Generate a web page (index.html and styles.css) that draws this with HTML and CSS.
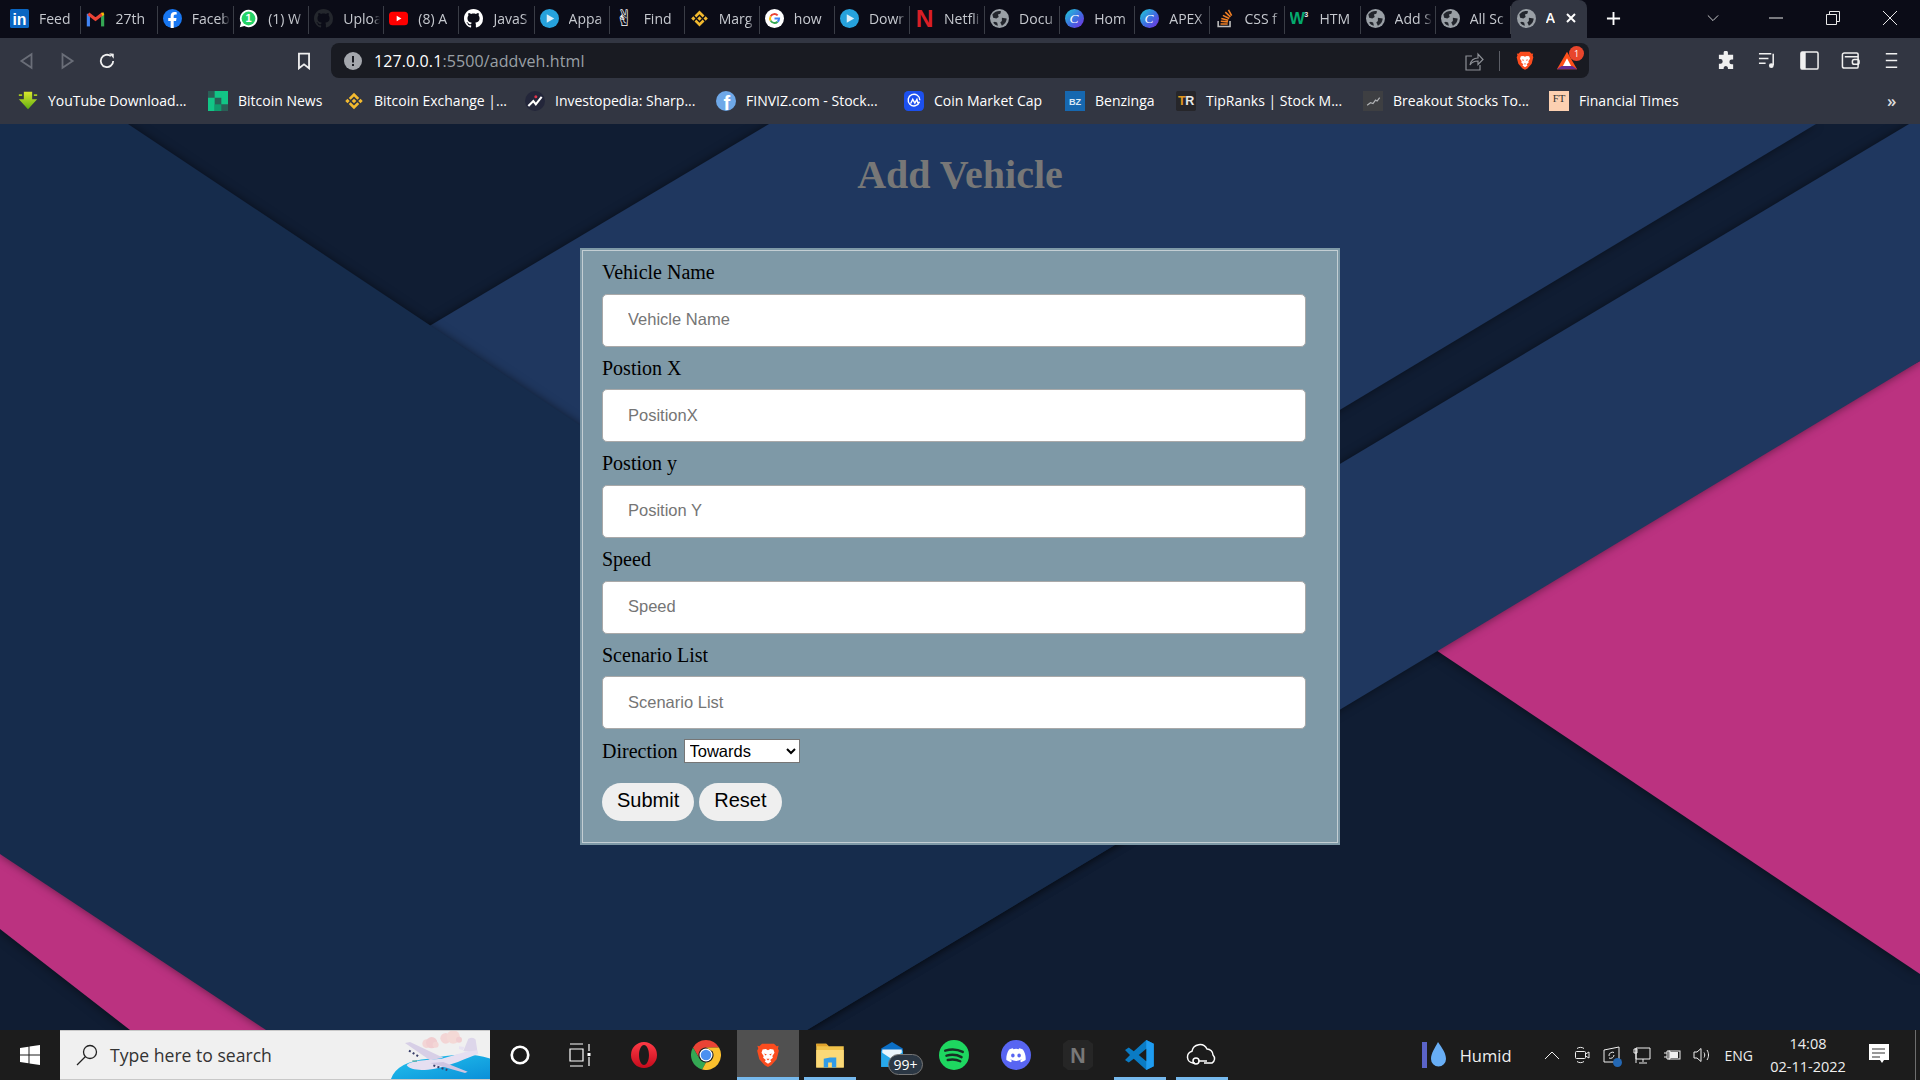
FILE: index.html
```html
<!DOCTYPE html>
<html lang="en">
<head>
<meta charset="utf-8">
<title>Add Vehicle</title>
<link rel="stylesheet" href="styles.css">
</head>
<body>
<svg class="defs" width="0" height="0" aria-hidden="true">
  <defs>
    <linearGradient id="g-canva" x1="0" y1="0" x2="1" y2="1"><stop offset="0" stop-color="#1fd0d8"/><stop offset=".55" stop-color="#3f6be0"/><stop offset="1" stop-color="#7a2be0"/></linearGradient>
    <linearGradient id="g-dl" x1="0" y1="0" x2="0" y2="1"><stop offset="0" stop-color="#d8e62c"/><stop offset="1" stop-color="#5fae12"/></linearGradient>
    <linearGradient id="g-sea" x1="0" y1="0" x2="1" y2="1"><stop offset="0" stop-color="#24c4ee"/><stop offset="1" stop-color="#0a8ed8"/></linearGradient>
    <linearGradient id="g-opera" x1="0" y1="0" x2="0" y2="1"><stop offset="0" stop-color="#ff3b46"/><stop offset="1" stop-color="#c60b1c"/></linearGradient>
    <symbol id="i-linkedin" viewBox="0 0 24 24"><rect width="24" height="24" rx="2" fill="#0a66c2"/><text x="3" y="20" class="t-in">in</text></symbol>
    <symbol id="i-gmail" viewBox="0 0 24 24"><path d="M3 22V6" stroke="#4285f4" stroke-width="4" fill="none"/><path d="M21 22V6" stroke="#34a853" stroke-width="4" fill="none"/><path d="M3 6l9 7 9-7" stroke="#ea4335" stroke-width="4" fill="none"/><path d="M19 5l3-1 1 3-2 2z" fill="#fbbc04"/></symbol>
    <symbol id="i-facebook" viewBox="0 0 24 24"><circle cx="12" cy="12" r="12" fill="#1877f2"/><path d="M13.5 24v-9h3l.6-3.6h-3.6V9.1c0-1 .5-2 2.1-2h1.7V4c-.9-.1-1.9-.2-2.8-.2-2.9 0-4.8 1.8-4.8 5v2.6H6.6V15h3.1v9z" fill="#fff"/></symbol>
    <symbol id="i-whatsapp" viewBox="0 0 24 24"><path d="M12 1a11 11 0 0 0-9.500 16.500L1 23l5.700-1.500A11 11 0 1 0 12 1z" fill="#fff"/><circle cx="12" cy="12" r="8.700" fill="#25d366"/><text x="12" y="17" class="t-wa">1</text></symbol>
    <symbol id="i-github" viewBox="0 0 16 16"><path fill="currentColor" d="M8 0C3.58 0 0 3.58 0 8c0 3.54 2.29 6.53 5.47 7.59.4.07.55-.17.55-.38 0-.19-.01-.82-.01-1.49-2.01.37-2.53-.49-2.69-.94-.09-.23-.48-.94-.82-1.13-.28-.15-.68-.52-.01-.53.63-.01 1.08.58 1.23.82.72 1.21 1.87.87 2.33.66.07-.52.28-.87.51-1.07-1.78-.2-3.64-.89-3.64-3.95 0-.87.31-1.59.82-2.15-.08-.2-.36-1.02.08-2.12 0 0 .67-.21 2.2.82.64-.18 1.32-.27 2-.27s1.36.09 2 .27c1.53-1.04 2.2-.82 2.2-.82.44 1.1.16 1.92.08 2.12.51.56.82 1.27.82 2.15 0 3.07-1.87 3.75-3.65 3.95.29.25.54.73.54 1.48 0 1.07-.01 1.93-.01 2.2 0 .21.15.46.55.38A8.01 8.01 0 0016 8c0-4.42-3.58-8-8-8z"/></symbol>
    <symbol id="i-youtube" viewBox="0 0 24 24"><rect y="3.500" width="24" height="17" rx="4.500" fill="#f00"/><path d="M9.700 8.500v7l6-3.500z" fill="#fff"/></symbol>
    <symbol id="i-play" viewBox="0 0 24 24"><circle cx="12" cy="12" r="12" fill="#26a2dc"/><path d="M8.500 6.500v11l9.500-5.500z" fill="#d8eef8"/></symbol>
    <symbol id="i-binance" viewBox="0 0 24 24"><path fill="#f3ba2f" d="M12 2l6.300 6.300-2.300 2.300-4-4-4 4-2.300-2.300zM12 22l-6.300-6.300 2.300-2.300 4 4 4-4 2.300 2.300zM1.500 12l2.700-2.700L6.900 12l-2.700 2.700zM17.100 12l2.700-2.700 2.700 2.700-2.700 2.700zM12 9.200l2.800 2.800-2.800 2.800L9.200 12z"/></symbol>
    <symbol id="i-google" viewBox="0 0 24 24"><circle cx="12" cy="12" r="12" fill="#fff"/><path d="M7.100 9.300A5.600 5.600 0 0 1 16 8.100" stroke="#ea4335" stroke-width="2.500" fill="none"/><path d="M7.100 9.300a5.600 5.600 0 0 0 0 5.400" stroke="#fbbc04" stroke-width="2.500" fill="none"/><path d="M7.100 14.700a5.600 5.600 0 0 0 8.800 1.300" stroke="#34a853" stroke-width="2.500" fill="none"/><path d="M12 12h5.800c0 1.700-.7 3-1.900 4" stroke="#4285f4" stroke-width="2.500" fill="none"/></symbol>
    <symbol id="i-netflix" viewBox="0 0 24 24"><text x="12" y="23" class="t-nf">N</text></symbol>
    <symbol id="i-globe" viewBox="0 0 24 24"><circle cx="12" cy="12" r="12" fill="#9aa0a6"/><path fill="#22252c" d="M3 7c3-4 8-5 11-4l-1 3-3 1 1 3-3 2-4-1zM15 11l6 1c0 4-3 8-6 9l-2-4 2-2zM6 16l3 1 1 4c-3-.5-5-2.500-6-4z"/></symbol>
    <symbol id="i-canva" viewBox="0 0 24 24"><circle cx="12" cy="12" r="12" fill="url(#g-canva)"/><text x="11.500" y="18" class="t-cv">C</text></symbol>
    <symbol id="i-stack" viewBox="0 0 24 24"><path d="M4 15v7h15v-7" stroke="#bcbbbb" stroke-width="2" fill="none"/><path d="M7 19h9M7.300 15.500l9 .8M8 12l8.700 2.200M10 8l8 4M13 4l6.500 6M17 1l4 7.500" stroke="#f48024" stroke-width="2" fill="none"/></symbol>
    <symbol id="i-w3" viewBox="0 0 24 24"><text x="-1" y="19" class="t-w">W</text><text x="18" y="10" class="t-w3">3</text></symbol>
    <symbol id="i-down" viewBox="0 0 24 24"><path d="M7 1h10v9h6L12 22 1 10h6z" fill="url(#g-dl)"/><path d="M1 4h4v2H1zM19 4h4v2h-4z" fill="#a6c81e"/></symbol>
    <symbol id="i-btcnews" viewBox="0 0 24 24"><rect width="24" height="24" fill="#2a5f56"/><path fill="#12c586" d="M8 0h8v8H8zM0 8h8v8H0zM16 8h8v8h-8zM0 16h8v8H0zM16 0h8v8h-8z"/><path fill="#0e9b6c" d="M8 16h8v8H8z"/></symbol>
    <symbol id="i-invest" viewBox="0 0 24 24"><circle cx="12" cy="12" r="12" fill="#23263a"/><path d="M4 18l6-6 3 4 7-9" stroke="#fff" stroke-width="2.500" fill="none"/><circle cx="13" cy="7" r="1.800" fill="#e0344b"/></symbol>
    <symbol id="i-finviz" viewBox="0 0 24 24"><circle cx="12" cy="12" r="12" fill="#6ea8e8"/><text x="13" y="23" class="t-fz">f</text></symbol>
    <symbol id="i-cmc" viewBox="0 0 24 24"><rect width="24" height="24" rx="5" fill="#1c50ee"/><path d="M18.500 13.500A7 7 0 1 1 19 11M8 15l2.500-5 2.500 4.500 2.500-4.500 1 4 2.500-.5" stroke="#fff" stroke-width="1.700" fill="none"/></symbol>
    <symbol id="i-bz" viewBox="0 0 24 24"><rect width="24" height="24" fill="#1668b0"/><text x="12" y="17" class="t-bz">BZ</text></symbol>
    <symbol id="i-tr" viewBox="0 0 24 24"><rect width="24" height="24" rx="2" fill="#26262a"/><text x="2.500" y="17" class="t-tr">T</text><text x="11" y="17" class="t-tr2">R</text></symbol>
    <symbol id="i-breakout" viewBox="0 0 24 24"><rect width="24" height="24" fill="#3e3f42"/><path d="M5 17l4-3 3 1 3-4 2 1 3-4" stroke="#b0b2b5" stroke-width="1.500" fill="none"/></symbol>
    <symbol id="i-ft" viewBox="0 0 24 24"><rect width="24" height="24" fill="#fcd0b1"/><text x="12" y="13" class="t-ft">FT</text></symbol>
    <symbol id="i-brave" viewBox="0 0 24 24"><path d="M6.500 1.500h11l2.500 2.500 1.800-.5-.6 2.500L22 8l-2 8-5 5.500-3 1.500-3-1.500L4 16 2 8l1-2-.8-2.500L4 4z" fill="#fb4c1e"/><path d="M12 7.500l2-1 3 .5 1 3-2 3 .5 1.500-2.500 2 1 1.500-3 2-3-2 1-1.500-2.500-2L8 13 6 10l1-3 3-.5z" fill="#fff"/><path d="M8.500 10.500l2.500 1-1.500 1zM15.500 10.500l-2.500 1 1.500 1zM10.500 15.500h3L12 17z" fill="#fb4c1e"/></symbol>
    <symbol id="i-bat" viewBox="0 0 24 24"><path d="M12 2L1 21h22z" fill="#ff4f1a"/><path d="M1 21h22l-5-3.500H6z" fill="#662d91"/><path d="M12 9l-4.500 8.500h9z" fill="#fff"/></symbol>
    <symbol id="i-opera" viewBox="0 0 24 24"><path fill-rule="evenodd" fill="url(#g-opera)" d="M12 0a12 12 0 1 0 0 24 12 12 0 0 0 0-24zm0 2.800c2.600 0 4.600 4.100 4.600 9.200s-2 9.200-4.600 9.200-4.600-4.100-4.600-9.200 2-9.200 4.600-9.200z"/></symbol>
    <symbol id="i-chrome" viewBox="0 0 24 24"><path d="M12 0a12 12 0 0 1 10.400 6H12z" fill="#ea4335"/><path d="M12 0v6a6 6 0 0 0-5.200 9L1.600 6A12 12 0 0 1 12 0z" fill="#ea4335"/><path d="M1.600 6l5.200 9a6 6 0 0 0 5.200 3L8.900 23.600A12 12 0 0 1 1.600 6z" fill="#34a853"/><path d="M22.400 6A12 12 0 0 1 8.900 23.600L12 18a6 6 0 0 0 5.200-9L12 6z" fill="#fbc02d"/><circle cx="12" cy="12" r="5.200" fill="#fff"/><circle cx="12" cy="12" r="4.200" fill="#4a90f0"/></symbol>
    <symbol id="i-folder" viewBox="0 0 24 24"><path d="M1 3h8l2 2h12v17H1z" fill="#f0c24a"/><path d="M1 3h8l2 2H1z" fill="#dfa22c"/><path d="M1 8h22v14H1z" fill="#fbd978"/><path d="M7 22v-7l5-1h5v8h-3.500v-4h-3v4z" fill="#2f9be8"/></symbol>
    <symbol id="i-mail" viewBox="0 0 24 24"><path d="M12 0l10 6v17H2V6z" fill="#0b6fc6"/><path d="M2 8h20v15H2z" fill="#28a8ea"/><path d="M3 7h18v3l-9 6-9-6z" fill="#eaf5fc"/></symbol>
    <symbol id="i-spotify" viewBox="0 0 24 24"><ellipse cx="12" cy="12" rx="12" ry="12" fill="#1ed760"/><path d="M5 8.500c5-1.500 10-1 14 1M6 12.500c4-1 8.500-.7 12 1.200M7 16c3.500-.7 7-.5 10 1" stroke="#173024" stroke-width="2" stroke-linecap="round" fill="none"/></symbol>
    <symbol id="i-discord" viewBox="0 0 24 24"><circle cx="12" cy="12" r="12" fill="#5865f2"/><path d="M17.500 7.500A12 12 0 0 0 14.500 6.500l-.4.800a11 11 0 0 0-4.200 0L9.500 6.500a12 12 0 0 0-3 1c-1.900 2.900-2.400 5.700-2.200 8.500a12 12 0 0 0 3.700 1.800l.8-1.300-1.300-.7.300-.2a8.600 8.600 0 0 0 8.400 0l.3.200-1.300.7.800 1.300a12 12 0 0 0 3.700-1.800c.3-3.200-.5-6-2.200-8.500zM9.500 14c-.8 0-1.400-.7-1.400-1.600s.6-1.600 1.400-1.600 1.400.7 1.400 1.600-.6 1.600-1.400 1.600zm5 0c-.8 0-1.400-.7-1.400-1.600s.6-1.600 1.400-1.600 1.400.7 1.400 1.600-.6 1.600-1.400 1.600z" fill="#fff"/></symbol>
    <symbol id="i-nest" viewBox="0 0 24 24"><path d="M4 0h16l4 3v18l-4 3H4l-4-3V3z" fill="#262626"/><text x="12" y="18" class="t-nn">N</text></symbol>
    <symbol id="i-vscode" viewBox="0 0 24 24"><path d="M17 0l6 3v18l-6 3-10-9-4 3-3-2 4-4-4-4 3-2 4 3z" fill="#0a7bc4"/><path d="M17 0l6 3v18l-6 3z" fill="#1f9cf0"/><path d="M17 7l-6 5 6 5z" fill="#1c1c1c"/></symbol>
    <symbol id="i-drop" viewBox="0 0 24 30"><rect x="0" y="2" width="5" height="26" fill="#5b63c8"/><path d="M16 2c-3 6-7 11-7 17a7.500 7.500 0 0 0 15 0c0-6-4-11-8-17z" fill="#68aef5"/></symbol>
  </defs>
</svg>

<header class="tabs">
  <div class="tab"><svg class="fav"><use href="#i-linkedin"/></svg><span class="tab-t">Feed</span></div>
  <div class="tab"><svg class="fav"><use href="#i-gmail"/></svg><span class="tab-t">27th</span></div>
  <div class="tab"><svg class="fav"><use href="#i-facebook"/></svg><span class="tab-t">Faceb</span></div>
  <div class="tab"><svg class="fav"><use href="#i-whatsapp"/></svg><span class="tab-t">(1) W</span></div>
  <div class="tab"><svg class="fav gh-dark"><use href="#i-github"/></svg><span class="tab-t">Uploa</span></div>
  <div class="tab"><svg class="fav"><use href="#i-youtube"/></svg><span class="tab-t">(8) A</span></div>
  <div class="tab"><svg class="fav gh-white"><use href="#i-github"/></svg><span class="tab-t">JavaS</span></div>
  <div class="tab"><svg class="fav"><use href="#i-play"/></svg><span class="tab-t">Appa</span></div>
  <div class="tab"><span class="fav hand">✌</span><span class="tab-t">Find</span></div>
  <div class="tab"><svg class="fav"><use href="#i-binance"/></svg><span class="tab-t">Marg</span></div>
  <div class="tab"><svg class="fav"><use href="#i-google"/></svg><span class="tab-t">how</span></div>
  <div class="tab"><svg class="fav"><use href="#i-play"/></svg><span class="tab-t">Dowr</span></div>
  <div class="tab"><svg class="fav"><use href="#i-netflix"/></svg><span class="tab-t">Netfli</span></div>
  <div class="tab"><svg class="fav"><use href="#i-globe"/></svg><span class="tab-t">Docu</span></div>
  <div class="tab"><svg class="fav"><use href="#i-canva"/></svg><span class="tab-t">Hom</span></div>
  <div class="tab"><svg class="fav"><use href="#i-canva"/></svg><span class="tab-t">APEX</span></div>
  <div class="tab"><svg class="fav"><use href="#i-stack"/></svg><span class="tab-t">CSS f</span></div>
  <div class="tab"><svg class="fav"><use href="#i-w3"/></svg><span class="tab-t">HTM</span></div>
  <div class="tab"><svg class="fav"><use href="#i-globe"/></svg><span class="tab-t">Add S</span></div>
  <div class="tab"><svg class="fav"><use href="#i-globe"/></svg><span class="tab-t">All Sc</span></div>
  <div class="tab tab-on"><svg class="fav"><use href="#i-globe"/></svg><span class="tab-t tab-t-on">A</span>
    <svg class="tab-x" viewBox="0 0 12 12"><path d="M2 2l8 8M10 2l-8 8"/></svg></div>
  <svg class="new-tab" viewBox="0 0 16 16"><path d="M8 1v14M1 8h14"/></svg>
  <div class="win-ctl">
    <svg class="wc wc-chev" viewBox="0 0 14 14"><path d="M1 4l6 6 6-6"/></svg>
    <svg class="wc wc-min" viewBox="0 0 14 14"><path d="M0 7h14"/></svg>
    <svg class="wc wc-res" viewBox="0 0 14 14"><path d="M.5 3.500h10v10H.500zM3.500 3.500v-3h10v10h-3"/></svg>
    <svg class="wc wc-cls" viewBox="0 0 14 14"><path d="M0 0l14 14M14 0L0 14"/></svg>
  </div>
</header>

<nav class="toolbar">
  <div class="nav-left">
    <span class="tb"><svg class="ti ti-dim" viewBox="0 0 16 16"><path d="M12 2v12L3 8z"/></svg></span>
    <span class="tb"><svg class="ti ti-dim" viewBox="0 0 16 16"><path d="M4 2v12l9-6z"/></svg></span>
    <span class="tb"><svg class="ti ti-w" viewBox="0 0 16 16"><path d="M13.500 8a5.500 5.500 0 1 1-2-4.300"/><path class="ti-fill" d="M10 1l4 .5V6z"/></svg></span>
    <span class="tb tb-mark"><svg class="ti ti-w" viewBox="0 0 16 16"><path d="M3.500 1.500h9v13L8 11l-4.500 3.500z"/></svg></span>
  </div>
  <div class="omni">
    <svg class="info" viewBox="0 0 18 18"><circle cx="9" cy="9" r="9"/><path d="M8 4h2v6.500H8zM8 12h2v2H8z"/></svg>
    <span class="url"><b class="host">127.0.0.1</b>:5500/addveh.html</span>
    <svg class="ti ti-g share" viewBox="0 0 20 20"><path d="M8 5H2v14h14v-5"/><path d="M6 14c1-5 4-7 8-7V3l5 5.500-5 5V10c-3 0-6 1-8 4z"/></svg>
    <span class="omni-sep"></span>
    <svg class="brave-ic"><use href="#i-brave"/></svg>
    <span class="bat"><svg class="bat-ic"><use href="#i-bat"/></svg><span class="bat-badge">1</span></span>
  </div>
  <div class="nav-right">
    <span class="rb"><svg class="rbi" viewBox="0 0 20 20"><path class="ti-solid" d="M7 1.500a2.300 2.300 0 0 1 4.500 0V4H17v5h-1.500a2.500 2.500 0 0 0 0 5H17v5h-5.500v-1.500a2.300 2.300 0 0 0-4.500 0V19H2v-5.500h1.500a2.500 2.500 0 0 0 0-5H2V4h5z"/></svg></span>
    <span class="rb"><svg class="rbi ti-w" viewBox="0 0 20 20"><path d="M1 3h13M1 8h10M1 13h7M16 3v12"/><circle class="ti-solid" cx="14" cy="15.500" r="2.500"/></svg></span>
    <span class="rb"><svg class="rbi ti-w" viewBox="0 0 20 20"><rect x="1" y="1" width="18" height="18" rx="1.500"/><path class="ti-solid" d="M1 1h5v18H1z"/></svg></span>
    <span class="rb"><svg class="rbi ti-w" viewBox="0 0 20 20"><path d="M18 6V3.500A1.500 1.500 0 0 0 16.500 2H3.500A2 2 0 0 0 1.500 4v12A2 2 0 0 0 3.500 18h13a1.500 1.500 0 0 0 1.500-1.500V6H4"/><rect x="12" y="9" width="7" height="5" rx="2"/></svg></span>
    <span class="rb"><svg class="rbi ti-w" viewBox="0 0 20 20"><path d="M4 3h12M4 10h12M4 17h12"/></svg></span>
  </div>
</nav>

<div class="bookmarks">
  <a class="bm"><svg class="bm-i"><use href="#i-down"/></svg><span>YouTube Download...</span></a>
  <a class="bm"><svg class="bm-i"><use href="#i-btcnews"/></svg><span>Bitcoin News</span></a>
  <a class="bm"><svg class="bm-i"><use href="#i-binance"/></svg><span>Bitcoin Exchange |...</span></a>
  <a class="bm"><svg class="bm-i"><use href="#i-invest"/></svg><span>Investopedia: Sharp...</span></a>
  <a class="bm"><svg class="bm-i"><use href="#i-finviz"/></svg><span>FINVIZ.com - Stock...</span></a>
  <a class="bm"><svg class="bm-i"><use href="#i-cmc"/></svg><span>Coin Market Cap</span></a>
  <a class="bm"><svg class="bm-i"><use href="#i-bz"/></svg><span>Benzinga</span></a>
  <a class="bm"><svg class="bm-i"><use href="#i-tr"/></svg><span>TipRanks | Stock M...</span></a>
  <a class="bm"><svg class="bm-i"><use href="#i-breakout"/></svg><span>Breakout Stocks To...</span></a>
  <a class="bm"><svg class="bm-i"><use href="#i-ft"/></svg><span>Financial Times</span></a>
  <span class="bm-more">»</span>
</div>

<main class="page">
  <svg class="backdrop" viewBox="0 0 1920 906" preserveAspectRatio="none" aria-hidden="true">
    <g transform="translate(0,-124)">
      <polygon class="sh-lg pink" points="0,840 300,1030 130,1030 0,929"/>
      <polygon class="sh-lg pink" points="1397,624 1920,361 1920,974"/>
      <polygon class="sh band" points="769,124 1816,124 1200,494 300,403"/>
      <polygon class="sh band" points="1909,124 1920,124 1920,361 807,1030 600,1030 1000,667"/>
      <polygon class="sh front" points="0,124 128,124 1165,815 807,1030 266,1030 0,854"/>
    </g>
  </svg>
  <h1 class="title">Add Vehicle</h1>
  <form class="card">
    <div class="field"><label class="lab">Vehicle Name</label><input class="inp" placeholder="Vehicle Name"></div>
    <div class="field"><label class="lab">Postion X</label><input class="inp" placeholder="PositionX"></div>
    <div class="field"><label class="lab">Postion y</label><input class="inp" placeholder="Position Y"></div>
    <div class="field"><label class="lab">Speed</label><input class="inp" placeholder="Speed"></div>
    <div class="field"><label class="lab">Scenario List</label><input class="inp" placeholder="Scenario List"></div>
    <div class="dir"><label class="lab-inline">Direction</label><select class="sel"><option>Towards</option></select></div>
    <div class="btns"><button type="button" class="btn">Submit</button><button type="button" class="btn">Reset</button></div>
  </form>
</main>

<footer class="taskbar">
  <span class="start"><svg class="win" viewBox="0 0 20 20"><path d="M0 3l8.500-1.200V9.500H0zM9.500 1.600L20 0v9.500H9.500zM0 10.500h8.500v7.700L0 17zM9.500 10.500H20V20L9.500 18.400z"/></svg></span>
  <div class="search">
    <svg class="mag" viewBox="0 0 22 22"><circle cx="14" cy="8" r="6.500"/><path d="M9.500 12.500L1 21"/></svg>
    <span class="search-t">Type here to search</span>
    <svg class="plane" viewBox="0 0 330 156">
      <path d="M18 156C30 120 70 100 130 95c60-10 130-25 200 5v56z" fill="url(#g-sea)"/>
      <circle cx="125" cy="50" r="13" fill="#f3d5d5"/><circle cx="140" cy="47" r="17" fill="#f1cdd0"/><circle cx="152" cy="53" r="9" fill="#f3d5d5"/>
      <circle cx="182" cy="34" r="16" fill="#f3d5d5"/><circle cx="205" cy="30" r="20" fill="#f4d9d6"/><circle cx="222" cy="38" r="9" fill="#f1cdd0"/>
      <path d="M60 48l15-3 100 47-40 8z" fill="#d7cfe6"/>
      <path d="M235 72l15-37q15-7 22 3l6 40z" fill="#ddd6ea"/>
      <path d="M222 58l16 2-4 10-12-4z" fill="#e8e3f2"/>
      <path d="M65 115c10-15 55-15 105-20l70-20 35-5 5 10c-40 15-80 35-130 45-40 7-75 5-85-10z" fill="#e6dff1"/>
      <path d="M135 108l40-3 73 29-8 4z" fill="#cfc5e2"/>
      <path d="M72 71l28 17M145 115l42 14" stroke="#3a3f6a" stroke-width="6" stroke-dasharray="6 7" fill="none"/>
      <path d="M82 102h14" stroke="#2f9a8a" stroke-width="3" fill="none"/>
    </svg>
  </div>
  <span class="cell"><svg class="ring" viewBox="0 0 20 20"><circle cx="10" cy="10" r="7.500"/></svg></span>
  <span class="cell"><svg class="tview" viewBox="0 0 22 24"><path d="M1 1h13M1 23h13M1 6h13v12H1zM20 1v7M20 14v9"/><path class="tv-dot" d="M18.500 10h3v3h-3z"/></svg></span>
  <span class="cell"><svg class="app"><use href="#i-opera"/></svg></span>
  <span class="cell"><svg class="app app-lg"><use href="#i-chrome"/></svg></span>
  <span class="cell cell-on run"><svg class="app"><use href="#i-brave"/></svg></span>
  <span class="cell run"><svg class="app app-lg"><use href="#i-folder"/></svg></span>
  <span class="cell"><svg class="app"><use href="#i-mail"/></svg><span class="mail-badge">99+</span></span>
  <span class="cell"><svg class="app app-lg"><use href="#i-spotify"/></svg></span>
  <span class="cell"><svg class="app app-lg"><use href="#i-discord"/></svg></span>
  <span class="cell"><svg class="app app-lg"><use href="#i-nest"/></svg></span>
  <span class="cell run"><svg class="app app-lg"><use href="#i-vscode"/></svg></span>
  <span class="cell run"><svg class="cloud" viewBox="0 0 32 26"><path d="M9 21H7a6 6 0 0 1-1-11.800A8 8 0 0 1 21 7a6 6 0 0 1 6 6 5 5 0 0 1-1 8h-8"/><circle cx="10" cy="19" r="3"/><path d="M13 19h8"/></svg></span>
  <div class="tray">
    <svg class="weather"><use href="#i-drop"/></svg>
    <span class="humid">Humid</span>
    <span class="tr"><svg class="tri" viewBox="0 0 18 18"><path d="M2 13l7-7 7 7"/></svg></span>
    <span class="tr"><svg class="tri" viewBox="0 0 18 18"><path d="M4 2.500c2-1.500 5-1.500 7 0M4 15.500c2 1.500 5 1.500 7 0"/><rect x="2.500" y="5.500" width="10" height="7" rx="1"/><path d="M12.500 8l3.500-2v6l-3.500-2"/></svg></span>
    <span class="tr tr-sync"><svg class="tri" viewBox="0 0 18 18"><path d="M1 4l15-3v15H1z"/><path d="M6 10a3.500 3.500 0 0 1 5-3.500M11 9a3.500 3.500 0 0 1-5 3"/></svg><span class="sync-dot"></span></span>
    <span class="tr"><svg class="tri" viewBox="0 0 18 18"><path d="M3 2h14v11H3zM3 2v15M10 13v3M6 17h8"/><path d="M1 3h3v4H1z"/></svg></span>
    <span class="tr"><svg class="tri" viewBox="0 0 18 18"><path d="M1 7h3M1 11h3M4 5h3v8H4z"/><rect x="6" y="5" width="11" height="8"/><path class="ti-solid" d="M7 6h8v6H7z"/></svg></span>
    <span class="tr"><svg class="tri" viewBox="0 0 18 18"><path d="M1 6h3l4-3.500v13L4 12H1zM11 6.500c1 1.500 1 3.500 0 5M14 4c2 3 2 7 0 10"/></svg></span>
    <span class="eng">ENG</span>
    <span class="clock"><span>14:08</span><span>02-11-2022</span></span>
    <span class="notif"><svg viewBox="0 0 20 22"><path class="n-fill" d="M0 0h20v16h-5l-2 3-2-3H0z"/><path class="n-line" d="M3 5h13M3 9h13M3 13h8"/></svg></span>
    <span class="show-desk"></span>
  </div>
</footer>
</body>
</html>
```

FILE: styles.css
```css
* { box-sizing: border-box; }
html, body { height: 100%; }
body {
  margin: 0;
  height: 1080px;
  display: flex;
  flex-direction: column;
  overflow: hidden;
  font-family: "Open Sans", "Noto Sans", sans-serif;
  color: #fff;
  background: #1f375f;
}
.defs { position: absolute; }
svg { display: block; }

/* logo text */
.t-in { font: 700 20px "Liberation Sans", sans-serif; fill: #fff; }
.t-wa { font: 700 14px "Liberation Sans", sans-serif; fill: #fff; text-anchor: middle; }
.t-nf { font: 700 31px "Liberation Sans", sans-serif; fill: #d81f26; text-anchor: middle; }
.t-cv { font: italic 400 17px "Liberation Serif", serif; fill: #fff; text-anchor: middle; }
.t-w { font: 700 21px "Liberation Sans", sans-serif; fill: #04aa6d; }
.t-w3 { font: 700 9px "Liberation Sans", sans-serif; fill: #e8e8e8; }
.t-fz { font: 700 24px "Liberation Sans", sans-serif; fill: #fff; text-anchor: middle; }
.t-bz { font: 700 11px "Liberation Sans", sans-serif; fill: #dce9f5; text-anchor: middle; }
.t-tr { font: 700 15px "Liberation Sans", sans-serif; fill: #e39a1e; }
.t-tr2 { font: 700 15px "Liberation Sans", sans-serif; fill: #e8e8e8; }
.t-ft { font: 400 13px "Liberation Serif", serif; fill: #33302e; text-anchor: middle; }
.t-nn { font: 700 17px "Liberation Sans", sans-serif; fill: #787878; text-anchor: middle; }

/* tabs */
.tabs {
  flex: 0 0 38px;
  display: flex;
  align-items: stretch;
  padding-left: 5px;
  background: #0b0c17;
  position: relative;
}
.tab {
  flex: 0 0 75.1px;
  display: flex;
  align-items: center;
  gap: 10px;
  padding: 0 3px 3px 5px;
  border-right: 1px solid #3a3d46;
  margin: 6px 0 4px;
  overflow: hidden;
}
.tab:nth-child(-n+3) { flex-basis: 76.4px; }
.fav { flex: 0 0 19px; width: 19px; height: 19px; }
.gh-dark { color: #24272d; }
.gh-white { color: #fff; }
.hand { font: 23px/19px "DejaVu Sans", sans-serif; text-align: center; color: #fff; }
.tab-t {
  flex: 1 1 auto;
  min-width: 0;
  overflow: hidden;
  white-space: nowrap;
  font-size: 14px;
  line-height: 20px;
  color: #c6c9cf;
  -webkit-mask-image: linear-gradient(to right, #000 78%, transparent 100%);
  mask-image: linear-gradient(to right, #000 78%, transparent 100%);
}
.tab-on {
  margin: 0;
  padding: 1px 3px 3px 6px;
  flex-basis: 76px;
  background: #323642;
  border-right: 0;
  border-radius: 8px 8px 0 0;
}
.tab-t-on { color: #fff; flex: 0 0 9px; -webkit-mask-image: none; mask-image: none; font-weight: 600; }
.tab-x { flex: 0 0 12px; width: 12px; height: 12px; margin-left: 0; fill: none; stroke: #fff; stroke-width: 2; }
.new-tab { width: 15px; height: 15px; margin: 11px 0 0 19px; fill: none; stroke: #fff; stroke-width: 2; }
.win-ctl { margin-left: auto; display: flex; align-items: center; padding-bottom: 2px; }
.wc { width: 14px; height: 14px; fill: none; stroke: #e8e8e8; stroke-width: 1; margin-right: 43px; }
.wc-chev { margin-right: 49px; height: 12px; }
.wc-cls { margin-right: 23px; }

/* toolbar */
.toolbar {
  flex: 0 0 44px;
  display: flex;
  align-items: flex-start;
  padding-top: 5px;
  background: #323642;
}
.nav-left { flex: 0 0 331px; display: flex; height: 35px; align-items: center; padding-left: 7px; }
.tb { flex: 0 0 40px; display: flex; justify-content: center; }
.tb-mark { margin-left: 157px; }
.ti { width: 18px; height: 18px; fill: none; stroke-width: 1.6; }
.ti-dim { stroke: #6a6e78; }
.ti-w { stroke: #f0f0f0; fill: none; stroke-width: 1.6; }
.ti-g { stroke: #8d9096; stroke-width: 1.2; }
.ti-fill { fill: #f0f0f0; stroke: none; }
.ti-solid { fill: #f0f0f0; stroke: none; }
.omni {
  flex: 0 0 1258px;
  height: 35px;
  display: flex;
  align-items: center;
  padding-left: 13px;
  background: #191b22;
  border-radius: 8px;
}
.info { width: 18px; height: 18px; fill: #a4a7ad; }
.info path { fill: #191b22; }
.url { margin-left: 12px; font-size: 16px; letter-spacing: .1px; color: #9aa0a6; }
.host { font-weight: 400; color: #fff; }
.share { margin-left: auto; width: 20px; height: 20px; }
.omni-sep { width: 1px; height: 20px; background: #5b5e66; margin: 0 15px; }
.brave-ic { width: 20px; height: 23px; }
.bat { position: relative; margin: 0 11px 0 21px; width: 22px; height: 22px; }
.bat-ic { width: 22px; height: 22px; }
.bat-badge {
  position: absolute;
  top: -4px;
  right: -6px;
  width: 15px;
  height: 15px;
  border-radius: 50%;
  background: #e8452c;
  font-size: 9px;
  line-height: 15px;
  text-align: center;
  color: #fff;
}
.nav-right { flex: 1; display: flex; height: 35px; align-items: center; padding-left: 128px; }
.rb { flex: 0 0 41.3px; display: flex; justify-content: flex-start; }
.rbi { width: 19px; height: 19px; }

/* bookmarks */
.bookmarks {
  flex: 0 0 42px;
  display: grid;
  grid-template-columns: 190px 136px 181px 191px 188px 161px 111px 187px 186px 1fr 20px;
  align-items: center;
  padding: 0 13px 5px 18px;
  background: #323642;
  font-size: 14px;
  color: #fff;
}
.bm { display: flex; align-items: center; gap: 10px; white-space: nowrap; }
.bm-i { flex: 0 0 20px; width: 20px; height: 20px; }
.bm-more { font-size: 17px; font-weight: 600; line-height: 20px; color: #dcdcdc; }

/* page */
.page {
  flex: 1;
  position: relative;
  display: flex;
  flex-direction: column;
  align-items: center;
  background: #101d33;
  overflow: hidden;
}
.backdrop { position: absolute; inset: 0; width: 100%; height: 100%; }
.sh-lg { filter: drop-shadow(0 0 6px rgba(0,0,0,.55)); }
.sh { filter: drop-shadow(0 0 5px rgba(0,0,0,.5)); }
.pink { fill: #bb3280; }
.band { fill: #1f375f; }
.front { fill: #162c4c; }
.title {
  position: relative;
  margin: 28px 0 51px;
  font: 700 40px/45px "Liberation Serif", "Times New Roman", serif;
  color: #777;
}
.card {
  position: relative;
  width: 760px;
  height: 597px;
  padding: 13px 22px 0;
  background: #7e99a7;
  box-shadow: inset 0 0 0 2px #7e99a7, inset 0 0 0 3px #c3ced3;
  color: #000;
  font: 20px/22px "Liberation Serif", "Times New Roman", serif;
}
.field { margin-bottom: 10.2px; }
.lab { display: block; margin-bottom: 10.5px; }
.inp {
  display: block;
  width: 704px;
  height: 53px;
  padding: 0 25px 1px;
  border: 1px solid #a9a9a9;
  border-radius: 5px;
  background: #fff;
  font: 16.5px "Liberation Sans", Arial, sans-serif;
  outline: 0;
}
.inp::placeholder { color: #757575; opacity: 1; }
.dir { height: 26.3px; margin-top: -1.1px; display: flex; align-items: center; gap: 6px; margin-bottom: 18px; }
.sel {
  width: 116px;
  height: 24px;
  padding: 0 0 0 1px;
  background: #fff;
  color: #000;
  border: 1px solid #767676;
  font: 16.5px "Liberation Sans", Arial, sans-serif;
}
.btns { display: flex; gap: 5px; }
.btn {
  height: 38px;
  padding: 0 15px 2px;
  border: 0;
  border-radius: 19px;
  background: #efefef;
  color: #000;
  font: 20px "Liberation Sans", Arial, sans-serif;
}

/* taskbar */
.taskbar {
  flex: 0 0 50px;
  display: flex;
  align-items: stretch;
  background: #1c1c1c;
}
.start { flex: 0 0 60px; display: flex; align-items: center; justify-content: center; }
.win { width: 20px; height: 20px; fill: #fff; }
.search {
  flex: 0 0 430px;
  display: flex;
  align-items: center;
  position: relative;
  margin-right: -1px;
  padding-left: 16px;
  background: #f0f0f0;
  border-top: 1px solid #c8c8c8;
  border-bottom: 1px solid #c8c8c8;
  overflow: hidden;
}
.mag { width: 22px; height: 22px; fill: none; stroke: #222; stroke-width: 1.3; }
.search-t { margin-left: 12px; font-size: 17.6px; color: #333; }
.plane { position: absolute; right: -5px; bottom: 0; width: 110px; height: 52px; }
.cell {
  flex: 0 0 62px;
  position: relative;
  display: flex;
  align-items: center;
  justify-content: center;
}
.cell-on { background: #505050; }
.run::after {
  content: "";
  position: absolute;
  left: 5px;
  right: 5px;
  bottom: 0;
  height: 3px;
  background: #76b9ed;
}
.cell-on.run::after { left: 0; right: 0; }
.ring { width: 22px; height: 22px; fill: none; stroke: #fff; stroke-width: 2.400; }
.tview { width: 22px; height: 24px; margin-right: 5px; fill: none; stroke: #fff; stroke-width: 1.200; }
.tv-dot { fill: #fff; stroke: none; }
.app { width: 26px; height: 30px; }
.app-lg { width: 30px; height: 30px; }
.cloud { width: 32px; height: 26px; fill: none; stroke: #fff; stroke-width: 1.500; }
.mail-badge {
  position: absolute;
  left: 27px;
  top: 24px;
  width: 35px;
  height: 21px;
  border: 1px solid #777;
  border-radius: 11px;
  background: #2b3744;
  font-size: 14px;
  line-height: 19px;
  text-align: center;
  color: #fff;
}
.tray { margin-left: auto; display: flex; align-items: center; }
.weather { width: 24px; height: 30px; }
.humid { margin: 0 25px 0 14px; font-size: 16.500px; color: #f0f0f0; }
.tr { flex: 0 0 30px; display: flex; justify-content: center; position: relative; }
.tri { width: 18px; height: 18px; fill: none; stroke: #eee; stroke-width: 1; }
.sync-dot { position: absolute; right: 5px; bottom: -3px; width: 9px; height: 9px; border-radius: 50%; background: #2468b4; }
.eng { margin: 0 0 0 8px; font-size: 14px; color: #eee; }
.clock { flex: 0 0 96px; display: flex; flex-direction: column; align-items: center; margin: 0 13px 0 7px; font-size: 14.5px; line-height: 23px; color: #eee; }
.notif { flex: 0 0 20px; width: 20px; margin: 0 26px 0 0; }
.notif svg { width: 20px; height: 22px; }
.n-fill { fill: #fff; }
.n-line { fill: none; stroke: #333; stroke-width: 1.200; }
.show-desk { width: 1px; height: 100%; background: #6e6e6e; margin-right: 4px; }
```
